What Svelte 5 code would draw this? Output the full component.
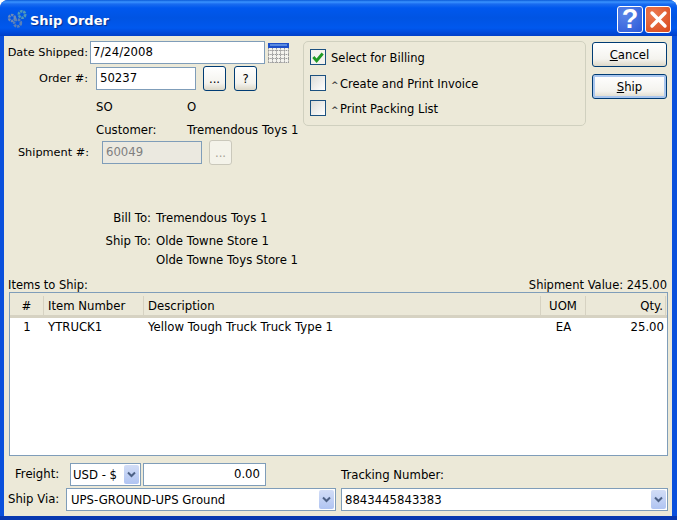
<script lang="ts">
  // Line items shown in the grid.
  const items = [
    { line: 1, number: 'YTRUCK1', description: 'Yellow Tough Truck Truck Type 1', uom: 'EA', qty: '25.00' },
  ];
  const options = [
    { label: 'Select for Billing', checked: true },
    { label: 'Create and Print Invoice', checked: false, flagged: true },
    { label: 'Print Packing List', checked: false, flagged: true },
  ];
</script>

{#snippet arrow()}
  <span class="drop">
    <svg width="9" height="7" viewBox="0 0 9 7"><path d="M1 1.5 L4.5 5 L8 1.5" fill="none" stroke="#4d6185" stroke-width="2" /></svg>
  </span>
{/snippet}

<div class="window">
  <header class="titlebar">
    <svg class="app-icon" width="22" height="22" viewBox="0 0 22 22">
      <g fill="none">
        <circle cx="6" cy="9" r="3" stroke="#6d8ab8" stroke-width="2.6" stroke-dasharray="2.4 0.8" />
        <circle cx="16" cy="5.5" r="3.2" stroke="#4f9ab8" stroke-width="2.6" stroke-dasharray="2.4 0.8" />
        <circle cx="11.5" cy="14" r="3.4" stroke="#5a80b8" stroke-width="2.6" stroke-dasharray="2.4 0.8" />
      </g>
    </svg>
    <span class="title">Ship Order</span>
    <div class="caption-btns">
      <span class="cap help">?</span>
      <span class="cap close">
        <svg width="19" height="19" viewBox="0 0 19 19"><path d="M3 3 L16 16 M16 3 L3 16" stroke="#fff" stroke-width="3.4" stroke-linecap="round" /></svg>
      </span>
    </div>
  </header>

  <main class="client">
    <section class="top">
      <div class="left">
        <div class="row date">
          <span class="lbl">Date Shipped:</span>
          <div class="field w175">7/24/2008</div>
          <svg class="cal" width="21" height="20" viewBox="0 0 21 20">
            <rect x="0" y="0" width="21" height="20" fill="#f4f3ee" />
            <rect x="0" y="0" width="21" height="5" fill="#1d4fc8" />
            <rect x="2" y="1" width="17" height="2" fill="#5a8ae0" />
            <path d="M0.5 5 V20 M4.5 5 V20 M8.5 5 V20 M12.5 5 V20 M16.5 5 V20 M20.5 5 V20 M0 7.5 H21 M0 11.5 H21 M0 15.5 H21 M0 19.5 H21" stroke="#9a9a9a" stroke-width="1" stroke-dasharray="1.5 0.7" />
          </svg>
        </div>
        <div class="row order">
          <span class="lbl">Order #:</span>
          <div class="field w100">50237</div>
          <button type="button" class="btn small">...</button>
          <button type="button" class="btn small">?</button>
        </div>
        <div class="pair so"><span>SO</span><span>O</span></div>
        <div class="pair customer"><span>Customer:</span><span>Tremendous Toys 1</span></div>
        <div class="row shipment">
          <span class="lbl">Shipment #:</span>
          <div class="field w100 off">60049</div>
          <button type="button" class="btn small off" disabled>...</button>
        </div>
        <div class="addr">
          <span class="k">Bill To:</span><span>Tremendous Toys 1</span>
          <span class="k ship">Ship To:</span><span class="ship">Olde Towne Store 1</span>
          <span></span><span>Olde Towne Toys Store 1</span>
        </div>
      </div>

      <div class="group">
        {#each options as o}
          <div class="check">
            <span class="box" class:on={o.checked}>
              {#if o.checked}
                <svg width="15" height="15" viewBox="0 0 15 15"><path d="M2.5 7 L6 11 L12.5 3.2" fill="none" stroke="#1f9a24" stroke-width="3" /></svg>
              {/if}
            </span>
            <span class="check-text">{#if o.flagged}<span class="caret">^</span>{/if}{o.label}</span>
          </div>
        {/each}
      </div>

      <div class="actions">
        <button type="button" class="btn big"><u>C</u>ancel</button>
        <button type="button" class="btn big default"><u>S</u>hip</button>
      </div>
    </section>

    <div class="items-head">
      <span>Items to Ship:</span>
      <span>Shipment Value: 245.00</span>
    </div>

    <div class="grid">
      <div class="cols thead">
        <span class="c">#</span>
        <span>Item Number</span>
        <span>Description</span>
        <span class="c">UOM</span>
        <span class="r">Qty.</span>
      </div>
      {#each items as it}
        <div class="cols tr">
          <span class="c">{it.line}</span>
          <span>{it.number}</span>
          <span>{it.description}</span>
          <span class="c">{it.uom}</span>
          <span class="r">{it.qty}</span>
        </div>
      {/each}
    </div>

    <section class="bottom">
      <div class="freight">
        <span class="fl">Freight:</span>
        <div class="field combo cur">USD - ${@render arrow()}</div>
        <div class="field amount">0.00</div>
        <span class="tl">Tracking Number:</span>
      </div>
      <div class="via">
        <span class="vl">Ship Via:</span>
        <div class="field combo shipvia">UPS-GROUND-UPS Ground{@render arrow()}</div>
        <div class="field combo track">8843445843383{@render arrow()}</div>
      </div>
    </section>
  </main>
</div>

<style>
  :global(body) {
    margin: 0;
    background: #fff;
  }
  .window {
    width: 677px;
    height: 520px;
    box-sizing: border-box;
    display: flex;
    flex-direction: column;
    border-radius: 8px 8px 0 0;
    overflow: hidden;
    background: #0a50dc;
    border-bottom: 4px solid #0838b0;
    font-family: 'DejaVu Sans', sans-serif;
    font-size: 11.7px;
    color: #000;
  }
  .titlebar {
    flex: none;
    height: 36px;
    display: flex;
    align-items: center;
    padding: 0 6px 0 6px;
    box-sizing: border-box;
    background: linear-gradient(180deg, #0a5ad8 0, #3a93ff 2px, #1a6cf0 4px, #0058ee 8px, #0054e3 18px, #0058ee 28px, #0048d8 33px, #0040c8 36px);
  }
  .app-icon {
    flex: none;
    margin-top: 3px;
  }
  .title {
    margin-left: 2px;
    margin-top: 5px;
    color: #fff;
    font-weight: bold;
    font-size: 13px;
    text-shadow: 1px 1px 1px #0a2f8c;
  }
  .caption-btns {
    margin-left: auto;
    margin-top: 3px;
    display: flex;
    gap: 2px;
  }
  .cap {
    width: 26px;
    height: 27px;
    box-sizing: border-box;
    display: flex;
    align-items: center;
    justify-content: center;
    border: 1px solid #fff;
    border-radius: 3px;
  }
  .help {
    background: radial-gradient(circle at 30% 30%, #5a86e8, #2c58d8);
    color: #fff;
    font: bold 27px 'Liberation Sans', sans-serif;
  }
  .close {
    background: radial-gradient(circle at 30% 30%, #ec7a50, #d8481c);
  }
  .client {
    flex: 1;
    min-height: 0;
    margin: 0 5px 0 4px;
    background: #ece9d8;
    display: flex;
    flex-direction: column;
    overflow: hidden;
  }
  .top {
    display: flex;
    height: 243px;
    flex: none;
  }
  .left {
    width: 299px;
    flex: none;
    padding-top: 5px;
    white-space: nowrap;
  }
  .row {
    display: flex;
    align-items: center;
    height: 25px;
  }
  .lbl {
    width: 84px;
    text-align: right;
    flex: none;
    font-size: 11.3px;
  }
  .field {
    box-sizing: border-box;
    height: 23px;
    line-height: 21px;
    padding: 0 3px;
    background: #fff;
    border: 1px solid #7f9db9;
    white-space: nowrap;
  }
  .w175 {
    width: 175px;
    margin-left: 2px;
    padding-left: 2px;
  }
  .w100 {
    width: 100px;
    margin-left: 8px;
  }
  .date {
    height: 23px;
  }
  .cal {
    margin-left: 3px;
    flex: none;
  }
  .order {
    margin-top: 2px;
  }
  .btn {
    box-sizing: border-box;
    font: inherit;
    color: #000;
    padding: 0;
    border: 1px solid #003c74;
    border-radius: 3px;
    background: linear-gradient(180deg, #fff 0, #f4f3ee 70%, #dcd8c8 100%);
  }
  .small {
    width: 23px;
    height: 25px;
    margin-left: 7px;
  }
  .small + .small {
    margin-left: 8px;
  }
  .off {
    color: #7f7f7f;
  }
  .field.off {
    background: #ebe9e0;
  }
  .btn.off {
    color: #a5a293;
    background: #f4f3ea;
    border-color: #cac8bb;
  }
  .pair {
    display: grid;
    grid-template-columns: 91px auto;
    padding-left: 92px;
    height: 15px;
    line-height: 15px;
  }
  .so {
    margin-top: 9px;
  }
  .customer {
    margin-top: 8px;
  }
  .shipment {
    margin-top: 2px;
  }
  .shipment .lbl {
    width: 85px;
  }
  .shipment .w100 {
    margin-left: 13px;
  }
  .addr {
    display: grid;
    grid-template-columns: 147px auto;
    column-gap: 5px;
    margin-top: 46px;
    line-height: 15px;
    row-gap: 4px;
  }
  .k {
    text-align: right;
  }
  .ship {
    margin-top: 4px;
  }
  .group {
    width: 283px;
    height: 85px;
    margin-top: 5px;
    flex: none;
    box-sizing: border-box;
    border: 1px solid #d0d0bf;
    border-radius: 5px;
    padding: 7px 0 0 6px;
    display: flex;
    flex-direction: column;
    gap: 10px;
  }
  .check {
    display: flex;
    align-items: center;
    height: 16px;
  }
  .check:last-child {
    margin-top: -1px;
  }
  .box {
    width: 16px;
    height: 16px;
    box-sizing: border-box;
    border: 1px solid #1c5180;
    background: linear-gradient(135deg, #dcdcd7 0, #fff 100%);
    display: flex;
    align-items: center;
    justify-content: center;
  }
  .box.on {
    background: #f4f3ee;
  }
  .check-text {
    margin: 2px 0 0 5px;
    font-size: 11.5px;
  }
  .caret {
    display: inline-block;
    width: 9px;
    font-size: 9px;
    font-weight: bold;
    color: #444;
  }
  .actions {
    margin: 6px 0 0 6px;
    display: flex;
    flex-direction: column;
    gap: 7px;
  }
  .big {
    width: 75px;
    height: 25px;
  }
  .default {
    border-color: #003c74;
    box-shadow: inset 0 0 0 2px #a9c6ee;
  }
  .items-head {
    flex: none;
    display: flex;
    justify-content: space-between;
    height: 13px;
    line-height: 12px;
    padding: 0 5px 0 4px;
    font-size: 11.5px;
  }
  .grid {
    flex: none;
    height: 164px;
    box-sizing: border-box;
    width: 659px;
    margin-left: 5px;
    background: #fff;
    border: 1px solid #7f9db9;
  }
  .cols {
    display: grid;
    grid-template-columns: 34px 100px 397px 45px 80px;
  }
  .thead {
    height: 25px;
    box-sizing: border-box;
    background: #ebe8d8;
    border-bottom: 3px solid #d6d2c2;
  }
  .thead span {
    border-right: 1px solid #d6d2c2;
    margin: 3px 0 1px;
    line-height: 20px;
    padding-left: 4px;
  }
  .thead span.c {
    padding-left: 0;
  }
  .thead span.r {
    padding: 0 2px 0 0;
  }
  .tr {
    height: 18px;
    line-height: 18px;
  }
  .tr span {
    padding-left: 4px;
    white-space: nowrap;
  }
  .tr span.c {
    padding-left: 0;
  }
  .tr span.r {
    padding: 0 2px 0 0;
  }
  .c {
    text-align: center;
  }
  .r {
    text-align: right;
  }
  .bottom {
    flex: none;
    padding-top: 7px;
  }
  .freight,
  .via {
    display: flex;
    align-items: center;
    height: 23px;
  }
  .via {
    margin-top: 2px;
  }
  .fl {
    margin-left: 11px;
    width: 55px;
    margin-bottom: 2px;
  }
  .vl {
    margin-left: 4px;
    width: 58px;
    margin-bottom: 2px;
  }
  .combo {
    display: flex;
    justify-content: space-between;
    align-items: center;
    padding-right: 1px;
    line-height: normal;
  }
  .cur {
    width: 71px;
    padding-left: 2px;
  }
  .amount {
    width: 123px;
    margin-left: 2px;
    text-align: right;
    padding-right: 5px;
  }
  .tl {
    margin-left: 75px;
  }
  .shipvia {
    width: 270px;
    padding-left: 4px;
  }
  .track {
    width: 327px;
    margin-left: 5px;
  }
  .drop {
    width: 15px;
    height: 19px;
    flex: none;
    display: flex;
    align-items: center;
    justify-content: center;
    border-radius: 2px;
    background: linear-gradient(180deg, #d2ddf6 0, #b0c4f2 100%);
  }
</style>
